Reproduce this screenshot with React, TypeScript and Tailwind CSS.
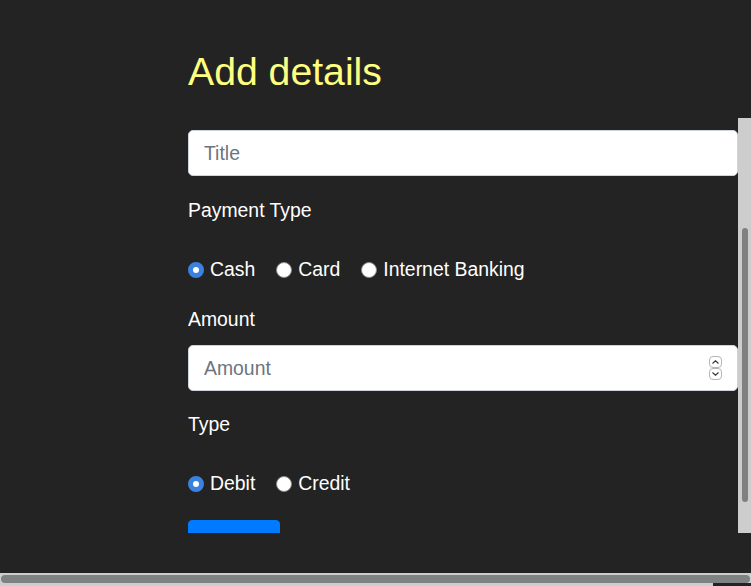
import React, { useState } from 'react';

const radioClass =
  'appearance-none w-4 h-4 rounded-full bg-white border border-[#8a8a8a] checked:border-[5px] checked:border-[#3b82e0] shrink-0 m-0';

const inputClass =
  'block w-full h-[46px] px-[15px] bg-white text-[#495057] placeholder:text-[#6c757d] border border-[#ced4da] rounded-[5px] outline-none';

function RadioGroup({
  name,
  options,
  value,
  onChange,
}: {
  name: string;
  options: string[];
  value: string;
  onChange: (v: string) => void;
}) {
  return (
    <div className="flex items-center h-[29px]">
      {options.map((opt, i) => (
        <label key={opt} className={`flex items-center ${i > 0 ? 'ml-[21px]' : ''}`}>
          <input
            type="radio"
            name={name}
            className={radioClass}
            checked={value === opt}
            onChange={() => onChange(opt)}
          />
          <span className="ml-[6px]">{opt}</span>
        </label>
      ))}
    </div>
  );
}

function Spinner() {
  return (
    <div className="absolute right-[16px] top-1/2 -translate-y-1/2 flex flex-col pointer-events-none">
      <div className="w-[13px] h-[12px] border border-[#b5b5b5] rounded-[4px] flex items-center justify-center">
        <svg width="7" height="4" viewBox="0 0 7 4">
          <path d="M0.5 3.5 L3.5 0.8 L6.5 3.5" fill="none" stroke="#333" strokeWidth="1.1" />
        </svg>
      </div>
      <div className="w-[13px] h-[12px] border border-[#b5b5b5] rounded-[4px] flex items-center justify-center">
        <svg width="7" height="4" viewBox="0 0 7 4">
          <path d="M0.5 0.5 L3.5 3.2 L6.5 0.5" fill="none" stroke="#333" strokeWidth="1.1" />
        </svg>
      </div>
    </div>
  );
}

export default function App() {
  const [payment, setPayment] = useState('Cash');
  const [kind, setKind] = useState('Debit');

  return (
    <div
      className="h-screen w-full flex flex-col overflow-hidden bg-[#232323] text-white"
      style={{ fontFamily: '"Liberation Sans", Arial, sans-serif' }}
    >
      <div className="flex-1 overflow-hidden pl-[188px] pt-12">
        <h1 className="text-[39.2px] leading-[48px] font-normal text-[#ffff80]">Add details</h1>

        <div className="mt-[22px] flex h-[415px]">
          <div className="w-[550px] overflow-hidden text-[19.4px] leading-[29px]">
            <form className="pt-3" onSubmit={(e) => e.preventDefault()}>
              <input type="text" placeholder="Title" className={inputClass} />

              <div className="mt-5">Payment Type</div>
              <div className="mt-[30px]">
                <RadioGroup
                  name="payment"
                  options={['Cash', 'Card', 'Internet Banking']}
                  value={payment}
                  onChange={setPayment}
                />
              </div>

              <div className="mt-[21px]">Amount</div>
              <div className="relative mt-[11px]">
                <input
                  type="number"
                  placeholder="Amount"
                  className={`${inputClass} [appearance:textfield] [&::-webkit-inner-spin-button]:appearance-none [&::-webkit-outer-spin-button]:appearance-none`}
                />
                <Spinner />
              </div>

              <div className="mt-[19px]">Type</div>
              <div className="mt-[30px]">
                <RadioGroup name="type" options={['Debit', 'Credit']} value={kind} onChange={setKind} />
              </div>

              <button
                type="submit"
                className="block mt-[22px] w-[92px] px-4 py-[6px] bg-[#007bff] text-white rounded-[4px] border border-[#007bff]"
              >
                Submit
              </button>
            </form>
          </div>

          {/* vertical scrollbar of the form panel */}
          <div className="w-[13px] bg-[#cdcdcd] flex justify-center">
            <div className="mt-[110px] w-[6px] h-[274px] rounded-full bg-[#808080]" />
          </div>
        </div>
      </div>

      {/* horizontal page scrollbar */}
      <div className="h-[13px] shrink-0 flex flex-col bg-[#cdcdcd]">
        <div className="h-[2px]" />
        <div className="h-[8px] mx-[1px] rounded-full bg-[#7f8282]" />
        <div className="flex-1 flex">
          <div className="flex-1" />
          <div className="w-[38px] bg-[#232323]" />
        </div>
      </div>
    </div>
  );
}
